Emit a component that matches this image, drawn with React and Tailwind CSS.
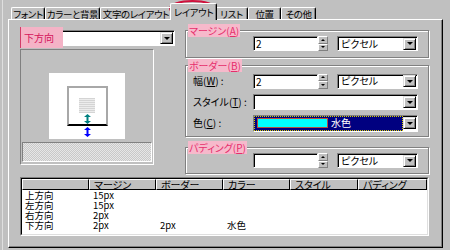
import React from "react"

const sunken =
  "border border-t-[#808080] border-l-[#808080] border-r-white border-b-white shadow-[inset_1px_1px_0_#000]"

const DropBtn = () => (
  <div className="ml-auto mr-[1px] flex h-[12px] w-[13px] shrink-0 items-center justify-center border border-t-[#dfdfdf] border-l-[#dfdfdf] border-r-black border-b-black bg-[#c0c0c0] shadow-[inset_1px_1px_0_#fff,inset_-1px_-1px_0_#808080]">
    <div className="h-0 w-0 border-x-[3px] border-t-[3px] border-x-transparent border-t-black" />
  </div>
)

const Select = ({ className, children }) => (
  <div className={`flex items-center bg-white ${sunken} ${className}`}>
    <div className="flex-1 whitespace-nowrap pl-[3px] leading-[10px]">{children}</div>
    <DropBtn />
  </div>
)

const Spin = () => (
  <div className="flex h-[15px] w-[10px] shrink-0 flex-col">
    <div className="flex flex-1 items-center justify-center border border-t-white border-l-white border-r-[#808080] border-b-[#808080] bg-[#c0c0c0]">
      <div className="h-0 w-0 border-x-[2px] border-b-[2px] border-x-transparent border-b-black" />
    </div>
    <div className="flex flex-1 items-center justify-center border border-t-white border-l-white border-r-[#808080] border-b-[#808080] bg-[#c0c0c0]">
      <div className="h-0 w-0 border-x-[2px] border-t-[2px] border-x-transparent border-t-black" />
    </div>
  </div>
)

const NumInput = ({ value }) => (
  <div className="flex items-center">
    <div className={`h-[15px] w-[65px] bg-white pl-[2px] leading-[13px] ${sunken}`}>{value}</div>
    <Spin />
  </div>
)

const Legend = ({ children }) => (
  <span className="absolute -top-[7px] left-[2px] h-[13px] whitespace-nowrap bg-[#f6b9cb] px-[1px] leading-[13px] text-[#e62e6b]">
    {children}
  </span>
)

const groupCls =
  "relative border border-[#808080] shadow-[inset_1px_1px_0_#fff,1px_1px_0_#fff]"

const Arrow = ({ color }) => (
  <svg width="7" height="10" viewBox="0 0 7 10">
    <path d="M3.5 0 L7 3 H4.5 V7 H7 L3.5 10 L0 7 H2.5 V3 H0 Z" fill={color} />
  </svg>
)

const tabs = [
  { label: "フォント", w: "w-[34px]" },
  { label: "カラーと背景", w: "w-[55px]" },
  { label: "文字のレイアウト", w: "w-[72px]" },
  { label: "レイアウト", w: "w-[47px]", active: true },
  { label: "リスト", w: "w-[33px]" },
  { label: "位置", w: "w-[33px]" },
  { label: "その他", w: "w-[35px]" },
]

const heads = ["", "マージン", "ボーダー", "カラー", "スタイル", "パディング"]
const rows = [
  ["上方向", "15px", "", "", "", ""],
  ["左方向", "15px", "", "", "", ""],
  ["右方向", "2px", "", "", "", ""],
  ["下方向", "2px", "2px", "水色", "", ""],
]

export default function App() {
  return (
    <div className="relative h-[250px] w-[450px] overflow-hidden bg-[#c0c0c0] font-['Noto_Sans_CJK_JP',sans-serif] text-[10px] leading-[10px] text-black [font-feature-settings:'palt'_1]">
      <div className="ml-[2px] h-full border-l border-l-[#dfdfdf] pl-[5px] pt-[3px]">
        {/* tabs */}
        <div className="relative z-10 flex h-[16px] items-end whitespace-nowrap pl-[3px] text-[9.5px] tracking-[-0.4px]">
          {tabs.map((t) =>
            t.active ? (
              <div
                key={t.label}
                className={`relative -mx-[2px] -mb-[1px] flex h-[17px] ${t.w} items-start justify-center rounded-t-[2px] border-t border-l border-r border-t-white border-l-white border-r-black bg-[#c0c0c0] pt-[3px] shadow-[inset_-1px_0_0_#808080]`}
              >
                {t.label}
              </div>
            ) : (
              <div
                key={t.label}
                className={`flex h-[12px] ${t.w} items-center justify-center rounded-t-[2px] border-t border-l border-r border-t-white border-l-white border-r-black shadow-[inset_-1px_0_0_#808080]`}
              >
                {t.label}
              </div>
            )
          )}
        </div>

        {/* panel */}
        <div className="h-[229px] w-[435px] border border-t-white border-l-white border-r-black border-b-black pl-[11px] pt-[10px] shadow-[inset_-1px_-1px_0_#808080]">
          <div className="flex items-start gap-[10px]">
            {/* left column */}
            <div className="w-[155px]">
              <div className="relative">
                <Select className="h-[16px] w-full">&nbsp;</Select>
                <div className="absolute -top-[3px] left-0 flex h-[21px] w-[43px] items-center border-l border-l-[#d23c68] bg-[#f4b3c6] pl-[3px] text-[#d4145a]">
                  下方向
                </div>
              </div>
              <div className="mt-[3px] flex h-[116px] w-[134px] flex-col items-center border border-t-[#808080] border-l-[#808080] border-r-white border-b-white">
                <div className="mt-[23px] flex h-[66px] w-[76px] flex-col items-center bg-white">
                  <div className="mt-[13px] flex h-[40px] w-[41px] flex-col items-center border-x-2 border-t-2 border-b-2 border-x-[#a8a8a8] border-t-[#a8a8a8] border-b-black">
                    <div className="mt-[10px] h-[15px] w-[16px] [background-image:repeating-linear-gradient(#d4d4d4_0_1px,#ececec_1px_2px)]" />
                    <div className="mt-[1px]">
                      <Arrow color="#008080" />
                    </div>
                  </div>
                  <div className="mt-[1px]">
                    <Arrow color="#0000ff" />
                  </div>
                </div>
                <div className="mt-[3px] h-[20px] w-[130px] border border-t-[#808080] border-l-[#808080] border-r-white border-b-white [background-image:repeating-conic-gradient(#c8c8c8_0_25%,#e6e6e6_0_50%)] [background-size:2px_2px]" />
              </div>
            </div>

            {/* right column */}
            <div className="w-[244px]">
              <div className={`${groupCls} h-[28px] pl-[67px] pt-[5px]`}>
                <Legend>
                  マージン(<u>A</u>)
                </Legend>
                <div className="flex items-center">
                  <NumInput value="2" />
                  <Select className="ml-[9px] h-[15px] w-[81px]">ピクセル</Select>
                </div>
              </div>

              <div className={`${groupCls} mt-[7px] h-[72px] pl-[7px] pt-[7px]`}>
                <Legend>
                  ボーダー(<u>B</u>)
                </Legend>
                <div className="flex flex-col gap-[5px]">
                  <div className="flex h-[16px] items-center">
                    <div className="w-[60px] whitespace-nowrap">
                      幅(<u>W</u>) :
                    </div>
                    <NumInput value="2" />
                    <Select className="ml-[9px] h-[15px] w-[81px]">ピクセル</Select>
                  </div>
                  <div className="flex h-[16px] items-center">
                    <div className="w-[60px] whitespace-nowrap">
                      スタイル(<u>T</u>) :
                    </div>
                    <Select className="h-[16px] w-[165px]">&nbsp;</Select>
                  </div>
                  <div className="flex h-[16px] items-center">
                    <div className="w-[60px] whitespace-nowrap">
                      色(<u>C</u>) :
                    </div>
                    <div className={`flex h-[17px] w-[165px] items-center bg-white ${sunken}`}>
                      <div className="flex h-full flex-1 items-center border border-dotted border-[#d8d000] bg-[#000080] pl-[2px]">
                        <div className="h-[10px] w-[71px] border border-[#b05040] bg-[#00ffff]" />
                        <span className="ml-[3px] text-white">水色</span>
                      </div>
                      <DropBtn />
                    </div>
                  </div>
                </div>
              </div>

              <div className={`${groupCls} mt-[10px] h-[27px] pl-[67px] pt-[5px]`}>
                <Legend>
                  パディング(<u>P</u>)
                </Legend>
                <div className="flex items-center">
                  <NumInput value="" />
                  <Select className="ml-[9px] h-[15px] w-[81px]">ピクセル</Select>
                </div>
              </div>
            </div>
          </div>

          {/* table */}
          <div className="mt-[3px] h-[59px] w-[409px] border border-t-[#808080] border-l-[#808080] border-r-white border-b-white">
            <div className="h-full w-full overflow-hidden border border-t-black border-l-black border-r-[#dfdfdf] border-b-[#dfdfdf] bg-white">
              <div className="grid grid-cols-[67px_67px_67px_67px_68px_1fr]">
                {heads.map((h, i) => (
                  <div
                    key={i}
                    className="h-[11px] whitespace-nowrap border border-t-white border-l-white border-r-black border-b-black bg-[#c0c0c0] pl-[4px] leading-[9px]"
                  >
                    {h}
                  </div>
                ))}
              </div>
              <div className="text-[9.5px]">
                {rows.map((r, ri) => (
                  <div key={ri} className="grid h-[10px] grid-cols-[67px_67px_67px_67px_68px_1fr] leading-[10px]">
                    {r.map((c, ci) => (
                      <div key={ci} className={ci === 0 ? "pl-[3px]" : "pl-[4px]"}>
                        {c}
                      </div>
                    ))}
                  </div>
                ))}
              </div>
            </div>
          </div>
        </div>
      </div>

      <svg className="absolute left-[168px] top-0" width="50" height="18" viewBox="0 0 50 18">
        <ellipse cx="24.5" cy="8.5" rx="22.5" ry="7.5" fill="none" stroke="#d0103c" strokeWidth="2" />
      </svg>
    </div>
  )
}
